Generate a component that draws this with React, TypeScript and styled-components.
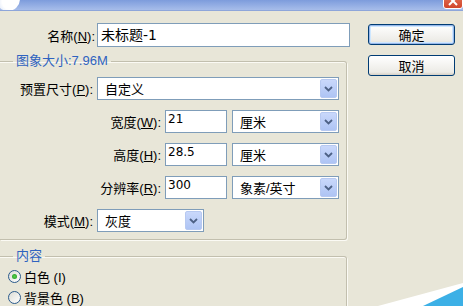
import React from "react";
import styled, { createGlobalStyle } from "styled-components";

const GlobalStyle = createGlobalStyle`
  html, body {
    margin: 0;
    padding: 0;
    background: #e8e6d8;
  }
  body {
    font-family: "Liberation Sans", "Noto Sans CJK SC", sans-serif;
    font-size: 13px;
    color: #000;
  }
`;

const Window = styled.div`
  position: relative;
  width: 463px;
  height: 306px;
  overflow: hidden;
  background: #e8e6d8;
`;

const TitleBar = styled.div`
  display: flex;
  justify-content: space-between;
  height: 11px;
  overflow: hidden;
  background: linear-gradient(to bottom, #7d9cdc, #a7bdea);
  border-bottom: 1px solid #8ea6da;
  box-sizing: border-box;
`;

const TitleIcon = styled.div`
  width: 24px;
  height: 24px;
  margin: -13px 0 0 -4px;
  border-radius: 50%;
  background: radial-gradient(circle at 60% 60%, #ffffff 40%, #dfe8f8 70%, #b5c8ee);
`;

const CloseButton = styled.div`
  display: flex;
  align-items: flex-end;
  justify-content: center;
  box-sizing: border-box;
  width: 20px;
  height: 20px;
  margin-top: -11px;
  padding-bottom: 2px;
  border-radius: 3px;
  background: linear-gradient(to bottom, #e6866d, #d2452a);
  border: 1px solid #fff;
`;

const Body = styled.div`
  display: flex;
  padding-top: 12px;
`;

const LeftColumn = styled.div`
  width: 350px;
  display: flex;
  flex-direction: column;
`;

const RightColumn = styled.div`
  display: flex;
  flex-direction: column;
  gap: 10px;
  margin-left: 18px;
  padding-top: 1px;
`;

const NameRow = styled.div`
  display: flex;
  align-items: center;
  height: 24px;
`;

const Label = styled.label<{ $width: number }>`
  width: ${(p) => p.$width}px;
  text-align: right;
  white-space: nowrap;
  flex-shrink: 0;
  font-size: 13px;
`;

const TextInput = styled.div<{ $width: number; $big?: boolean }>`
  box-sizing: border-box;
  width: ${(p) => p.$width}px;
  height: ${(p) => (p.$big ? 24 : 23)}px;
  background: #fff;
  border: 1px solid #7f9db9;
  padding: ${(p) => (p.$big ? "0 3px" : "0 2px")};
  font-size: ${(p) => (p.$big ? 14 : 12)}px;
  line-height: ${(p) => (p.$big ? 22 : 17)}px;
  font-family: "DejaVu Sans", "Noto Sans CJK SC", sans-serif;
  white-space: nowrap;
`;

const GroupBox = styled.fieldset<{ $gapTop: number }>`
  margin: ${(p) => p.$gapTop}px 0 0 0;
  padding: 0;
  width: 347px;
  box-sizing: border-box;
  border: 1px solid #c2bfae;
  border-left: none;
  border-radius: 0 3px 3px 0;
  box-shadow: 1px 1px 0 #fbfaf4, inset 0 1px 0 #fbfaf4;
`;

const Legend = styled.legend`
  margin-left: 13px;
  padding: 0 3px;
  line-height: 14px;
  font-size: 13px;
  color: #2f63c0;
`;

const FieldGrid = styled.div`
  display: flex;
  flex-direction: column;
  gap: 10px;
  padding: 9px 0 7px 0;
`;

const FieldRow = styled.div`
  display: flex;
  align-items: center;
  height: 23px;
`;

const Select = styled.div<{ $width: number; $gapLeft?: number }>`
  box-sizing: border-box;
  display: flex;
  align-items: center;
  justify-content: space-between;
  width: ${(p) => p.$width}px;
  height: 23px;
  margin-left: ${(p) => p.$gapLeft ?? 0}px;
  background: #fff;
  border: 1px solid #7f9db9;
  padding: 1px 1px 1px 7px;
  font-size: 13px;
  white-space: nowrap;
`;

const DropArrow = styled.span`
  display: flex;
  align-items: center;
  justify-content: center;
  width: 17px;
  height: 19px;
  border-radius: 2px;
  background: linear-gradient(to bottom, #c9d8fb, #aec4f4);
  border: 1px solid #b7c9f1;
  box-sizing: border-box;
`;

const RadioList = styled.div`
  display: flex;
  flex-direction: column;
  padding: 3px 0 0 8px;
`;

const RadioRow = styled.div`
  display: flex;
  align-items: center;
  gap: 3px;
  height: 21px;
`;

const RadioDot = styled.span<{ $checked?: boolean }>`
  position: relative;
  box-sizing: border-box;
  width: 13px;
  height: 13px;
  border-radius: 50%;
  border: 1px solid #2a5a8c;
  background: linear-gradient(135deg, #dcdcd5, #ffffff);
  &::after {
    content: "";
    display: ${(p) => (p.$checked ? "block" : "none")};
    position: absolute;
    left: 3px;
    top: 3px;
    width: 5px;
    height: 5px;
    border-radius: 50%;
    background: radial-gradient(circle, #55d04a, #219621);
  }
`;

const DialogButton = styled.button<{ $default?: boolean }>`
  box-sizing: border-box;
  width: 87px;
  height: 21px;
  padding: 0;
  border: 1px solid #003c74;
  border-radius: 3px;
  background: linear-gradient(to bottom, #ffffff, #ecebe6 85%, #d6d0c5);
  box-shadow: ${(p) =>
    p.$default ? "inset 0 0 0 1px #98b8ea, inset 0 0 0 2px #cee7ff" : "none"};
  font-family: "Noto Sans CJK SC", sans-serif;
  font-size: 13px;
  line-height: 18px;
  color: #000;
`;

const Corner = styled.svg`
  position: absolute;
  right: 0;
  bottom: 0;
`;

const Chevron = () => (
  <svg width="9" height="6" viewBox="0 0 9 6">
    <path d="M1 1 L4.5 4.5 L8 1" fill="none" stroke="#4d6185" strokeWidth="1.8" />
  </svg>
);

const CloseCross = () => (
  <svg width="10" height="10" viewBox="0 0 10 10">
    <path d="M1 1 L9 9 M9 1 L1 9" stroke="#fff" strokeWidth="2" />
  </svg>
);

const Key = ({ k }: { k: string }) => (
  <>
    (<u>{k}</u>):
  </>
);

export default function App() {
  return (
    <Window>
      <GlobalStyle />
      <TitleBar>
        <TitleIcon />
        <CloseButton>
          <CloseCross />
        </CloseButton>
      </TitleBar>
      <Body>
        <LeftColumn>
          <NameRow>
            <Label $width={95}>
              名称<Key k="N" />
            </Label>
            <TextInput $width={253} $big style={{ marginLeft: 2 }}>
              未标题-1
            </TextInput>
          </NameRow>

          <GroupBox $gapTop={7}>
            <Legend>图象大小:7.96M</Legend>
            <FieldGrid>
              <FieldRow>
                <Label $width={93}>
                  预置尺寸<Key k="P" />
                </Label>
                <Select $width={242} $gapLeft={4}>
                  自定义
                  <DropArrow>
                    <Chevron />
                  </DropArrow>
                </Select>
              </FieldRow>
              <FieldRow>
                <Label $width={161}>
                  宽度<Key k="W" />
                </Label>
                <TextInput $width={62} style={{ marginLeft: 4 }}>
                  21
                </TextInput>
                <Select $width={107} $gapLeft={5}>
                  厘米
                  <DropArrow>
                    <Chevron />
                  </DropArrow>
                </Select>
              </FieldRow>
              <FieldRow>
                <Label $width={161}>
                  高度<Key k="H" />
                </Label>
                <TextInput $width={62} style={{ marginLeft: 4 }}>
                  28.5
                </TextInput>
                <Select $width={107} $gapLeft={5}>
                  厘米
                  <DropArrow>
                    <Chevron />
                  </DropArrow>
                </Select>
              </FieldRow>
              <FieldRow>
                <Label $width={161}>
                  分辨率<Key k="R" />
                </Label>
                <TextInput $width={62} style={{ marginLeft: 4 }}>
                  300
                </TextInput>
                <Select $width={107} $gapLeft={5}>
                  象素/英寸
                  <DropArrow>
                    <Chevron />
                  </DropArrow>
                </Select>
              </FieldRow>
              <FieldRow>
                <Label $width={93}>
                  模式<Key k="M" />
                </Label>
                <Select $width={107} $gapLeft={4}>
                  灰度
                  <DropArrow>
                    <Chevron />
                  </DropArrow>
                </Select>
              </FieldRow>
            </FieldGrid>
          </GroupBox>

          <GroupBox $gapTop={9}>
            <Legend>内容</Legend>
            <RadioList>
              <RadioRow>
                <RadioDot $checked />
                白色 (I)
              </RadioRow>
              <RadioRow>
                <RadioDot />
                背景色 (B)
              </RadioRow>
            </RadioList>
          </GroupBox>
        </LeftColumn>

        <RightColumn>
          <DialogButton $default>确定</DialogButton>
          <DialogButton>取消</DialogButton>
        </RightColumn>
      </Body>

      <Corner width="90" height="25" viewBox="0 0 90 25">
        <polygon points="5,25 90,2 90,25" fill="#ffffff" />
        <polygon points="50,25 90,6 90,25" fill="#3cb0e6" />
      </Corner>
    </Window>
  );
}
